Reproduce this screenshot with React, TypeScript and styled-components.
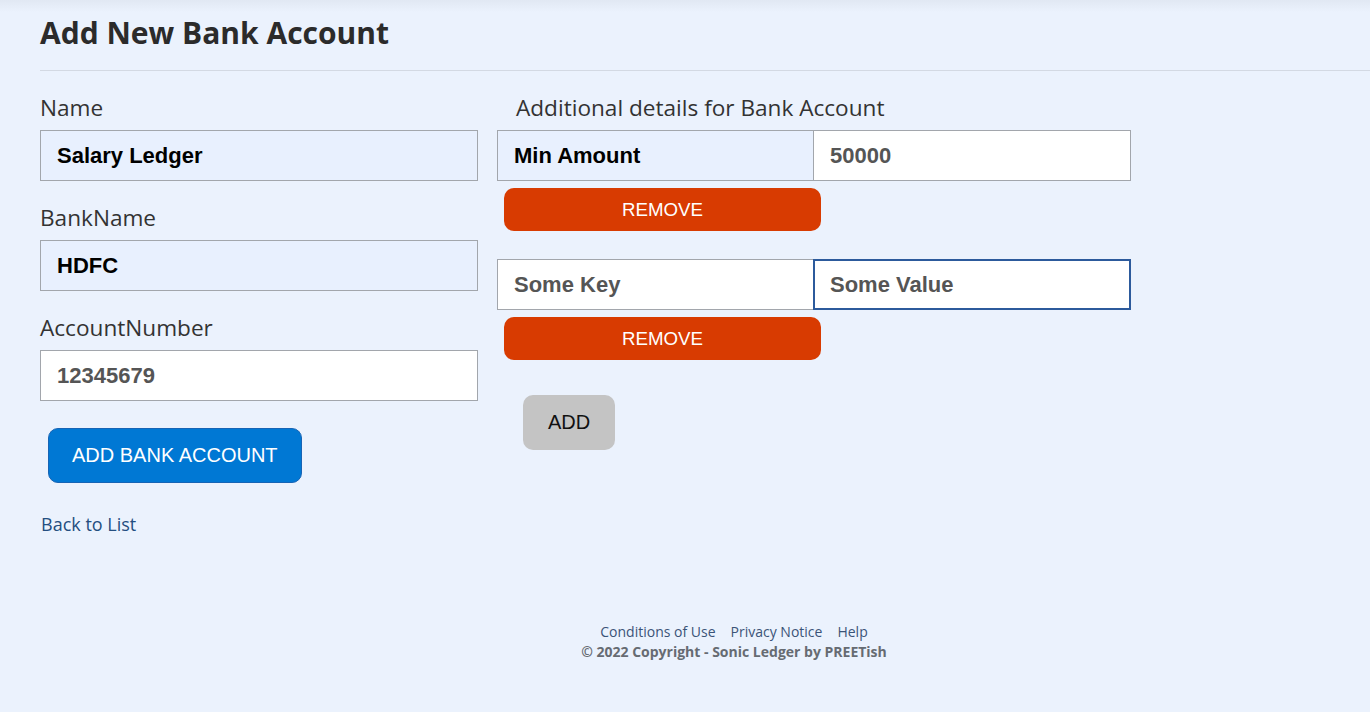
import { useState } from 'react'
import styled, { createGlobalStyle } from 'styled-components'

type Detail = { key: string; value: string; filled?: boolean; focused?: boolean }

const GlobalStyle = createGlobalStyle`
  html, body {
    margin: 0;
    padding: 0;
    background-color: #ebf2fd;
  }

  body {
    background: linear-gradient(to bottom, #e1e8f3 0px, #ebf2fd 12px) #ebf2fd;
    min-height: 712px;
    font-family: "Open Sans", "Liberation Sans", sans-serif;
  }
`

export default function App() {
  const [details, setDetails] = useState<Detail[]>([
    { key: 'Min Amount', value: '50000', filled: true },
    { key: 'Some Key', value: 'Some Value', focused: true },
  ])

  const removeDetail = (index: number) => {
    setDetails(details.filter((_, i) => i !== index))
  }

  const addDetail = () => {
    setDetails([...details, { key: '', value: '' }])
  }

  return (
    <>
      <GlobalStyle />
      <Page>
        <Title>Add New Bank Account</Title>
        <Divider />

        <FormLayout>
          <Column>
            <Label>Name</Label>
            <TextInput $filled defaultValue="Salary Ledger" />

            <Label>BankName</Label>
            <TextInput $filled defaultValue="HDFC" />

            <Label>AccountNumber</Label>
            <TextInput defaultValue="12345679" />

            <PrimaryButton type="button">ADD BANK ACCOUNT</PrimaryButton>

            <BackLink href="#">Back to List</BackLink>
          </Column>

          <DetailsColumn>
            <DetailsLabel>Additional details for Bank Account</DetailsLabel>
            {details.map((detail, index) => (
              <DetailRow key={index}>
                <PairRow>
                  <PairInput $filled={detail.filled} defaultValue={detail.key} />
                  <PairInput $focused={detail.focused} defaultValue={detail.value} />
                </PairRow>
                <RemoveButton type="button" onClick={() => removeDetail(index)}>
                  REMOVE
                </RemoveButton>
              </DetailRow>
            ))}
            <AddButton type="button" onClick={addDetail}>ADD</AddButton>
          </DetailsColumn>
        </FormLayout>

        <Footer>
          <FooterLinks>
            <FooterLink href="#">Conditions of Use</FooterLink>
            <FooterLink href="#">Privacy Notice</FooterLink>
            <FooterLink href="#">Help</FooterLink>
          </FooterLinks>
          <Copyright>© 2022 Copyright - Sonic Ledger by PREETish</Copyright>
        </Footer>
      </Page>
    </>
  )
}

const Page = styled.div`
  padding: 12px 0 0 40px;
  display: flex;
  flex-direction: column;
`

const Title = styled.h1`
  margin: 0;
  font-family: "Open Sans", sans-serif;
  font-weight: 700;
  font-size: 30px;
  line-height: 41px;
  color: #2b2b2b;
`

const Divider = styled.hr`
  margin: 17px 0 0 0;
  border: none;
  border-top: 1px solid #d3d9e3;
  height: 0;
`

const FormLayout = styled.div`
  display: flex;
  gap: 19px;
  margin-top: 22px;
`

const Column = styled.div`
  width: 438px;
  display: flex;
  flex-direction: column;
  align-items: flex-start;
`

const Label = styled.label`
  font-family: "Open Sans", sans-serif;
  font-size: 22.6px;
  line-height: 30px;
  color: #333;
  margin-bottom: 7px;

  & ~ & {
    margin-top: 22px;
  }
`

const TextInput = styled.input<{ $filled?: boolean }>`
  box-sizing: border-box;
  width: 438px;
  height: 51px;
  padding: 0 16px;
  border: 1px solid #a2a6ac;
  border-radius: 0;
  outline: none;
  background-color: ${p => (p.$filled ? '#e8f0fe' : '#ffffff')};
  color: ${p => (p.$filled ? '#000000' : '#555555')};
  font-family: "Liberation Sans", Arial, sans-serif;
  font-weight: 700;
  font-size: 22px;
`

const PrimaryButton = styled.button`
  margin: 27px 0 0 8px;
  height: 55px;
  padding: 0 23px;
  border: 1px solid #1764b5;
  border-radius: 10px;
  background-color: #0078d4;
  color: #ffffff;
  font-family: "Liberation Sans", Arial, sans-serif;
  font-size: 20px;
  cursor: pointer;
`

const BackLink = styled.a`
  margin-top: 29px;
  margin-left: 1px;
  font-family: "Open Sans", sans-serif;
  font-size: 18px;
  line-height: 24px;
  color: #244e80;
  text-decoration: none;
`

const DetailsColumn = styled.div`
  width: 634px;
  display: flex;
  flex-direction: column;
  align-items: flex-start;
`

const DetailsLabel = styled.div`
  padding-left: 19px;
  font-family: "Open Sans", sans-serif;
  font-size: 22.6px;
  line-height: 30px;
  color: #333;
  margin-bottom: 7px;
`

const DetailRow = styled.div`
  display: flex;
  flex-direction: column;
  margin-bottom: 28px;

  &:last-of-type {
    margin-bottom: 35px;
  }
`

const PairRow = styled.div`
  display: flex;
`

const PairInput = styled.input<{ $filled?: boolean; $focused?: boolean }>`
  box-sizing: border-box;
  width: 317px;
  height: 51px;
  padding: 0 16px;
  border: 1px solid ${p => (p.$focused ? '#2c5a9c' : '#a2a6ac')};
  box-shadow: ${p => (p.$focused ? 'inset 0 0 0 1px #2c5a9c' : 'none')};
  border-radius: 0;
  outline: none;
  background-color: ${p => (p.$filled ? '#e8f0fe' : '#ffffff')};
  color: ${p => (p.$filled ? '#000000' : '#555555')};
  font-family: "Liberation Sans", Arial, sans-serif;
  font-weight: 700;
  font-size: 22px;

  & + & {
    width: 318px;
    margin-left: -1px;
  }
`

const RemoveButton = styled.button`
  margin: 7px 0 0 7px;
  width: 317px;
  height: 43px;
  border: none;
  border-radius: 10px;
  background-color: #d83b01;
  color: #ffffff;
  font-family: "Liberation Sans", Arial, sans-serif;
  font-size: 18.7px;
  cursor: pointer;
`

const AddButton = styled.button`
  margin-left: 26px;
  height: 55px;
  padding: 0 25px;
  border: none;
  border-radius: 10px;
  background-color: #c4c4c4;
  color: #111111;
  font-family: "Liberation Sans", Arial, sans-serif;
  font-size: 20px;
  cursor: pointer;
`

const Footer = styled.footer`
  margin-top: 86px;
  padding-left: 58px;
  display: flex;
  flex-direction: column;
  align-items: center;
  font-family: "Open Sans", sans-serif;
  font-size: 14px;
  line-height: 20px;
`

const FooterLinks = styled.div`
  display: flex;
  gap: 15px;
`

const FooterLink = styled.a`
  color: #3b5478;
  text-decoration: none;
`

const Copyright = styled.div`
  font-weight: 700;
  color: #666b72;
`
